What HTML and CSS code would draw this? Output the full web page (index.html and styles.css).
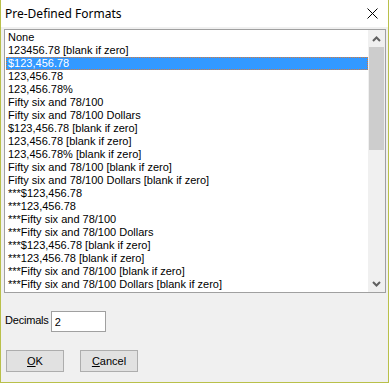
FILE: index.html
```html
<!DOCTYPE html>
<html lang="en">
<head>
    <meta charset="UTF-8">
    <title>Pre-Defined Formats</title>
    <link rel="stylesheet" href="styles.css">
</head>
<body>
    <div class="window">
        <div class="titlebar">
            <span class="title">Pre-Defined Formats</span>
            <svg class="close" width="11" height="11" viewBox="0 0 11 11">
                <path d="M0.5 0.5 L10.5 10.5 M10.5 0.5 L0.5 10.5" stroke="#000" stroke-width="1" fill="none"/>
            </svg>
        </div>

        <div class="dialog-body">
            <!-- format list -->
            <div class="listbox">
                <ul class="items">
                    <li>None</li>
                    <li>123456.78 [blank if zero]</li>
                    <li class="selected">$123,456.78</li>
                    <li>123,456.78</li>
                    <li>123,456.78%</li>
                    <li>Fifty six and 78/100</li>
                    <li>Fifty six and 78/100 Dollars</li>
                    <li>$123,456.78 [blank if zero]</li>
                    <li>123,456.78 [blank if zero]</li>
                    <li>123,456.78% [blank if zero]</li>
                    <li>Fifty six and 78/100 [blank if zero]</li>
                    <li>Fifty six and 78/100 Dollars [blank if zero]</li>
                    <li>***$123,456.78</li>
                    <li>***123,456.78</li>
                    <li>***Fifty six and 78/100</li>
                    <li>***Fifty six and 78/100 Dollars</li>
                    <li>***$123,456.78 [blank if zero]</li>
                    <li>***123,456.78 [blank if zero]</li>
                    <li>***Fifty six and 78/100 [blank if zero]</li>
                    <li>***Fifty six and 78/100 Dollars [blank if zero]</li>
                </ul>
                <div class="scrollbar">
                    <div class="arrow">
                        <svg width="9" height="6" viewBox="0 0 9 6">
                            <path d="M1 5 L4.5 1.5 L8 5" stroke="#606060" stroke-width="2" fill="none"/>
                        </svg>
                    </div>
                    <div class="track">
                        <div class="thumb"></div>
                    </div>
                    <div class="arrow">
                        <svg width="9" height="6" viewBox="0 0 9 6">
                            <path d="M1 1 L4.5 4.5 L8 1" stroke="#606060" stroke-width="2" fill="none"/>
                        </svg>
                    </div>
                </div>
            </div>

            <div class="decimals-row">
                <label class="decimals-label" for="decimals">Decimals</label>
                <input class="decimals-input" id="decimals" type="text" value="2">
            </div>

            <div class="buttons">
                <button class="btn btn-ok"><u>O</u>K</button>
                <button class="btn btn-cancel"><u>C</u>ancel</button>
            </div>
        </div>
    </div>
</body>
</html>
```

FILE: styles.css
```css
body {
    margin: 0;
    padding: 0;
    background: #f0f0f0;
    font-family: "Liberation Sans", Arial, sans-serif;
    font-size: 11px;
}

.window {
    width: 387px;
    height: 382px;
    border: 1px solid #b9c04a;
    border-top: none;
    background: #f0f0f0;
    display: flex;
    flex-direction: column;
}

.titlebar {
    height: 27px;
    background: #fff;
    display: flex;
    align-items: center;
    justify-content: space-between;
    padding: 0 10px 0 4px;
}

.title {
    font-family: "Noto Sans", sans-serif;
    font-size: 12px;
    color: #000;
    margin-top: -1px;
}

.close {
    margin-top: -1px;
}

.dialog-body {
    flex: 1;
    padding: 2px 2px 0 3px;
}

/* list with scrollbar */
.listbox {
    height: 262px;
    border: 1px solid #a0a0a0;
    background: #fff;
    display: flex;
}

.items {
    flex: 1;
    list-style: none;
    margin: 0;
    padding: 1px 0 0 1px;
    overflow: hidden;
}

.items li {
    height: 13px;
    line-height: 13px;
    padding-left: 2px;
    white-space: nowrap;
    color: #000;
}

.items li.selected {
    background: #3399ff;
    color: #fff;
    outline: 1px dotted #d87a3a;
    outline-offset: -1px;
}

.scrollbar {
    width: 17px;
    background: #f0f0f0;
    display: flex;
    flex-direction: column;
}

.arrow {
    height: 17px;
    display: flex;
    align-items: center;
    justify-content: center;
}

.track {
    flex: 1;
}

.thumb {
    height: 103px;
    margin: 0 1px;
    background: #cdcdcd;
}

.decimals-row {
    display: flex;
    align-items: center;
    margin-top: 18px;
    padding-left: 1px;
}

.decimals-label {
    margin-right: 2px;
    margin-top: -4px;
    letter-spacing: -0.2px;
}

.decimals-input {
    width: 50px;
    height: 19px;
    box-sizing: content-box;
    padding: 0 0 0 3px;
    margin: 0;
    border: 1px solid #a0a0a0;
    font-family: "Liberation Sans", Arial, sans-serif;
    font-size: 11px;
    background: #fff;
}

.buttons {
    display: flex;
    gap: 16px;
    margin-top: 18px;
    padding-left: 2px;
}

.btn {
    height: 22px;
    background: #e1e1e1;
    border: 1px solid #adadad;
    font-family: "Liberation Sans", Arial, sans-serif;
    font-size: 11px;
    color: #000;
    padding: 0;
}

.btn-ok {
    width: 58px;
}

.btn-cancel {
    width: 58px;
}
```
